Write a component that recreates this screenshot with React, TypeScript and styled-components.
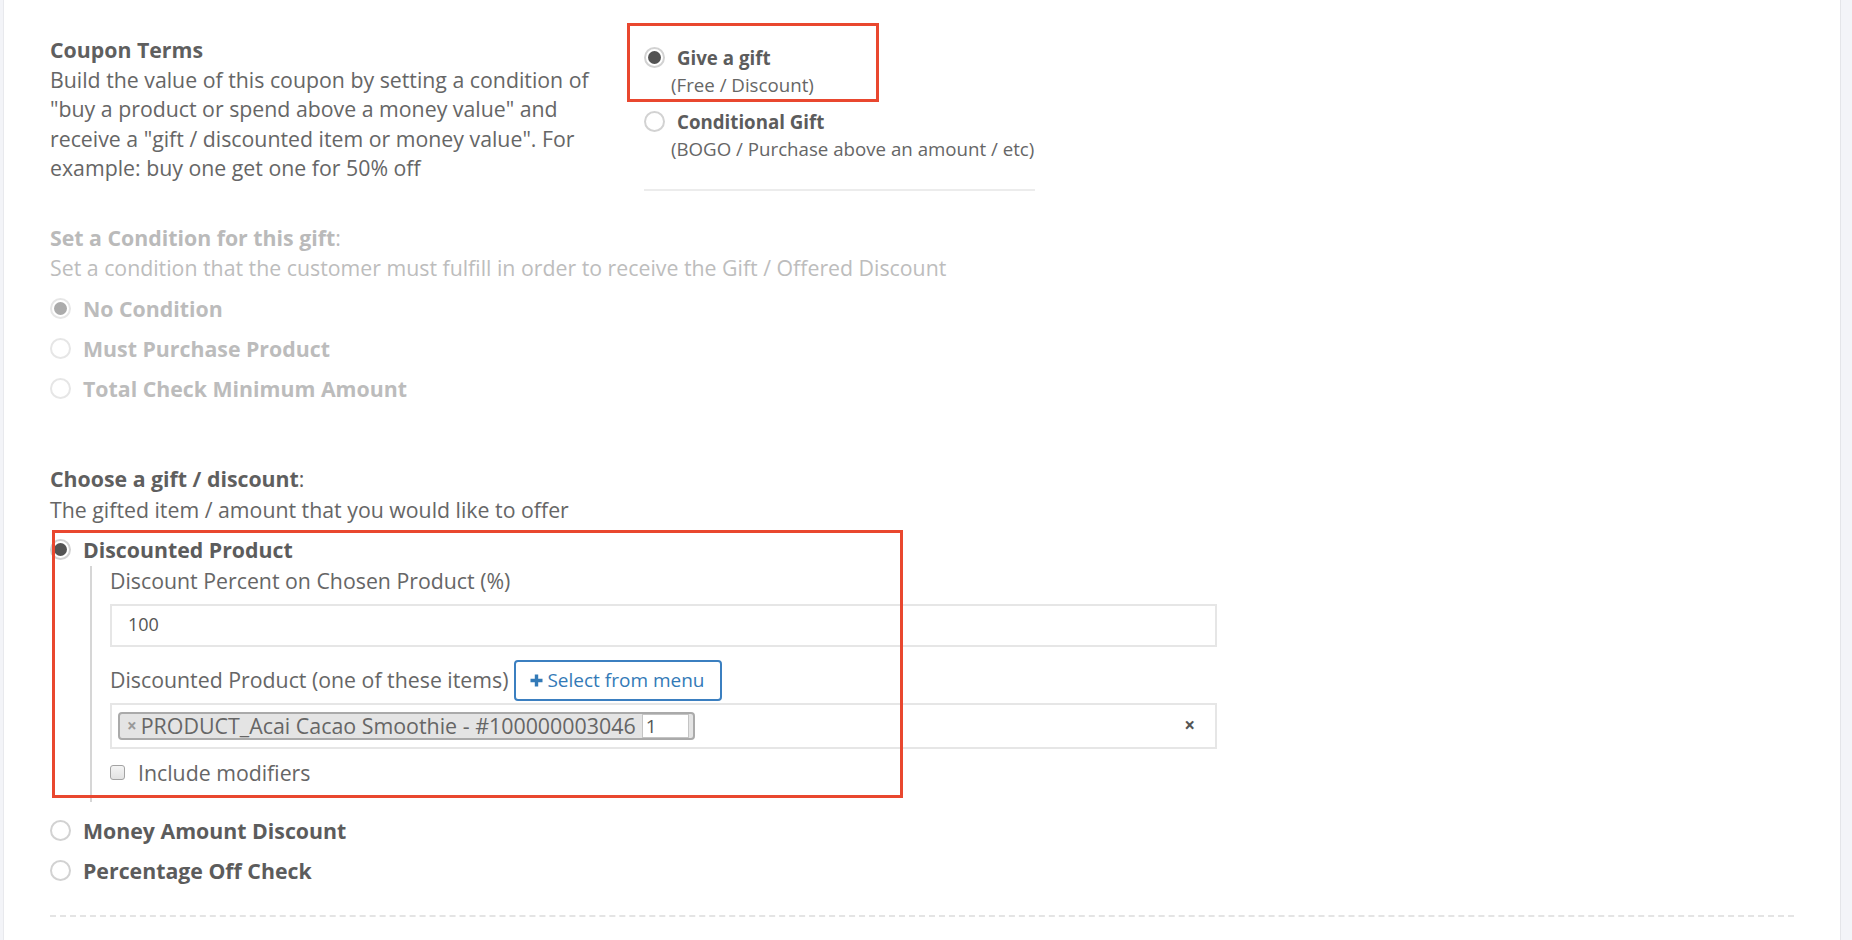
import React from 'react';
import styled, { createGlobalStyle } from 'styled-components';

const GlobalStyle = createGlobalStyle`
  html, body { margin: 0; padding: 0; background: #f3f4f8; }
  body { font-family: 'Open Sans', 'Noto Sans', sans-serif; color: #666; }
  * { box-sizing: border-box; }
`;

const Page = styled.div`
  margin-left: 3px;
  width: 1838px;
  min-height: 940px;
  background: #fff;
  border-left: 1px solid #e8e9ed;
  border-right: 1px solid #e4e5e9;
  padding: 35px 0 0 46px;
  font-size: 21.3px;
  line-height: 29.6px;
`;

const TopRow = styled.div`
  display: flex;
  align-items: flex-start;
`;

const Terms = styled.div`
  width: 565px;
  color: #666;
`;

const Title = styled.div<{ $muted?: boolean }>`
  font-weight: 700;
  color: ${p => (p.$muted ? '#bababa' : '#5f5f5f')};
  & > span { font-weight: 400; }
`;

const Desc = styled.div<{ $muted?: boolean }>`
  margin-top: 1px;
  color: ${p => (p.$muted ? '#bdbdbd' : '#666')};
`;

const TypeCol = styled.div`
  margin-left: 29px;
  width: 391px;
  padding-top: 9.4px;
  font-size: 18.7px;
  line-height: 27px;
`;

const TypeOption = styled.div<{ $gap?: number }>`
  position: relative;
  margin-top: ${p => p.$gap ?? 0}px;
`;

const TypeHead = styled.div`
  display: flex;
  align-items: center;
  gap: 12px;
  font-weight: 700;
  color: #5c5c5c;
`;

const TypeSub = styled.div`
  padding-left: 27px;
  color: #666;
`;

const Divider = styled.div`
  margin-top: 26.9px;
  height: 2px;
  background: #ececec;
`;

const Highlight = styled.div<{ $l: number; $t: number; $w: number; $h: number }>`
  position: absolute;
  left: ${p => p.$l}px;
  top: ${p => p.$t}px;
  width: ${p => p.$w}px;
  height: ${p => p.$h}px;
  border: 3px solid #e9472f;
  pointer-events: none;
  z-index: 2;
`;

const Section = styled.div<{ $top: number }>`
  margin-top: ${p => p.$top}px;
`;

const RadioList = styled.div<{ $top: number }>`
  margin-top: ${p => p.$top}px;
`;

const RadioRow = styled.div<{ $muted?: boolean; $top?: number }>`
  display: flex;
  align-items: center;
  gap: 12px;
  height: 40px;
  margin-top: ${p => p.$top ?? 0}px;
  font-weight: 700;
  color: ${p => (p.$muted ? '#bcbcbc' : '#5c5c5c')};
`;

const Radio = styled.span<{ $checked?: boolean; $muted?: boolean }>`
  flex: none;
  width: 21px;
  height: 21px;
  border-radius: 50%;
  border: 2px solid ${p => (p.$muted ? '#e6e6e6' : '#d2d2d2')};
  background: #fff;
  display: flex;
  align-items: center;
  justify-content: center;
  &::after {
    content: '';
    width: 13px;
    height: 13px;
    border-radius: 50%;
    background: ${p => (p.$muted ? '#ababab' : '#535353')};
    display: ${p => (p.$checked ? 'block' : 'none')};
  }
`;

const OptionBlock = styled.div`
  position: relative;
`;

const Nested = styled.div`
  margin: -4px 0 0 40px;
  border-left: 2px solid #d6d6d6;
  padding: 0 0 15.2px 18px;
  width: 1127px;
  color: #666;
`;

const FieldLabel = styled.div``;

const TextInput = styled.div`
  margin-top: 8.4px;
  height: 43px;
  border: 2px solid #e6e6e6;
  padding-left: 16px;
  display: flex;
  align-items: center;
  font-size: 18px;
  color: #555;
`;

const PickRow = styled.div`
  margin-top: 13px;
  display: flex;
  align-items: center;
  gap: 6px;
  height: 41px;
`;

const PickButton = styled.button`
  height: 41px;
  padding: 0 15px 0 14px;
  border: 2px solid #3b7fc0;
  border-radius: 4px;
  background: #fff;
  color: #337ab7;
  font-family: 'Open Sans', 'Noto Sans', sans-serif;
  font-size: 19px;
  display: flex;
  align-items: center;
  gap: 4px;
  cursor: pointer;
`;

const MultiSelect = styled.div`
  margin-top: 2px;
  height: 46px;
  border: 2px solid #e6e6e6;
  padding: 0 20px 0 6px;
  display: flex;
  align-items: center;
`;

const Tag = styled.div`
  height: 28px;
  border: 2px solid #aaa;
  border-radius: 4px;
  background: #e4e4e4;
  padding: 0 4px 0 7px;
  display: flex;
  align-items: center;
  color: #666;
  font-size: 21.4px;
`;

const TagRemove = styled.span`
  color: #999;
  font-weight: 700;
  font-size: 17px;
  margin-right: 4px;
`;

const QtyBox = styled.span`
  margin-left: 6px;
  width: 47px;
  height: 24px;
  border: 1px solid #c4c4c4;
  background: #fff;
  font-size: 19px;
  line-height: 22px;
  padding-left: 3px;
  color: #555;
`;

const ClearAll = styled.span`
  margin-left: auto;
  font-weight: 700;
  font-size: 19px;
  color: #555;
`;

const CheckRow = styled.div`
  margin-top: 9.2px;
  display: flex;
  align-items: center;
  gap: 13px;
`;

const CheckBox = styled.span`
  width: 15px;
  height: 15px;
  border: 1px solid #a3a3a3;
  border-radius: 3px;
  background: linear-gradient(#f4f4f4, #e2e2e2);
`;

const Dashed = styled.div`
  margin-top: 24px;
  width: 1744px;
  border-top: 2px dashed #e4e4e4;
`;

const PlusIcon = () => (
  <svg width="13" height="13" viewBox="0 0 13 13">
    <path d="M6.5 0.5v12M0.5 6.5h12" stroke="#337ab7" strokeWidth="3.4" />
  </svg>
);

export default function App() {
  return (
    <>
      <GlobalStyle />
      <Page>
        <TopRow>
          <Terms>
            <Title>Coupon Terms</Title>
            Build the value of this coupon by setting a condition of "buy a product or spend above a money value" and receive a "gift / discounted item or money value". For example: buy one get one for 50% off
          </Terms>
          <TypeCol>
            <TypeOption>
              <Highlight $l={-17} $t={-21.4} $w={252} $h={79} />
              <TypeHead>
                <Radio $checked />
                Give a gift
              </TypeHead>
              <TypeSub>(Free / Discount)</TypeSub>
            </TypeOption>
            <TypeOption $gap={9.7}>
              <TypeHead>
                <Radio />
                Conditional Gift
              </TypeHead>
              <TypeSub>(BOGO / Purchase above an amount / etc)</TypeSub>
            </TypeOption>
            <Divider />
          </TypeCol>
        </TopRow>

        <Section $top={31.6}>
          <Title $muted>
            Set a Condition for this gift<span>:</span>
          </Title>
          <Desc $muted>Set a condition that the customer must fulfill in order to receive the Gift / Offered Discount</Desc>
          <RadioList $top={5.8}>
            <RadioRow $muted>
              <Radio $checked $muted />
              No Condition
            </RadioRow>
            <RadioRow $muted>
              <Radio $muted />
              Must Purchase Product
            </RadioRow>
            <RadioRow $muted>
              <Radio $muted />
              Total Check Minimum Amount
            </RadioRow>
          </RadioList>
        </Section>

        <Section $top={55.7}>
          <Title>
            Choose a gift / discount<span>:</span>
          </Title>
          <Desc>The gifted item / amount that you would like to offer</Desc>
          <RadioList $top={5.1}>
            <OptionBlock>
              <Highlight $l={2} $t={0} $w={851} $h={268} />
              <RadioRow>
                <Radio $checked />
                Discounted Product
              </RadioRow>
              <Nested>
                <FieldLabel>Discount Percent on Chosen Product (%)</FieldLabel>
                <TextInput>100</TextInput>
                <PickRow>
                  <FieldLabel>Discounted Product (one of these items)</FieldLabel>
                  <PickButton type="button">
                    <PlusIcon />
                    Select from menu
                  </PickButton>
                </PickRow>
                <MultiSelect>
                  <Tag>
                    <TagRemove>×</TagRemove>
                    PRODUCT_Acai Cacao Smoothie - #100000003046
                    <QtyBox>1</QtyBox>
                  </Tag>
                  <ClearAll>×</ClearAll>
                </MultiSelect>
                <CheckRow>
                  <CheckBox />
                  Include modifiers
                </CheckRow>
              </Nested>
            </OptionBlock>
            <RadioRow $top={8.5}>
              <Radio />
              Money Amount Discount
            </RadioRow>
            <RadioRow>
              <Radio />
              Percentage Off Check
            </RadioRow>
          </RadioList>
          <Dashed />
        </Section>
      </Page>
    </>
  );
}
